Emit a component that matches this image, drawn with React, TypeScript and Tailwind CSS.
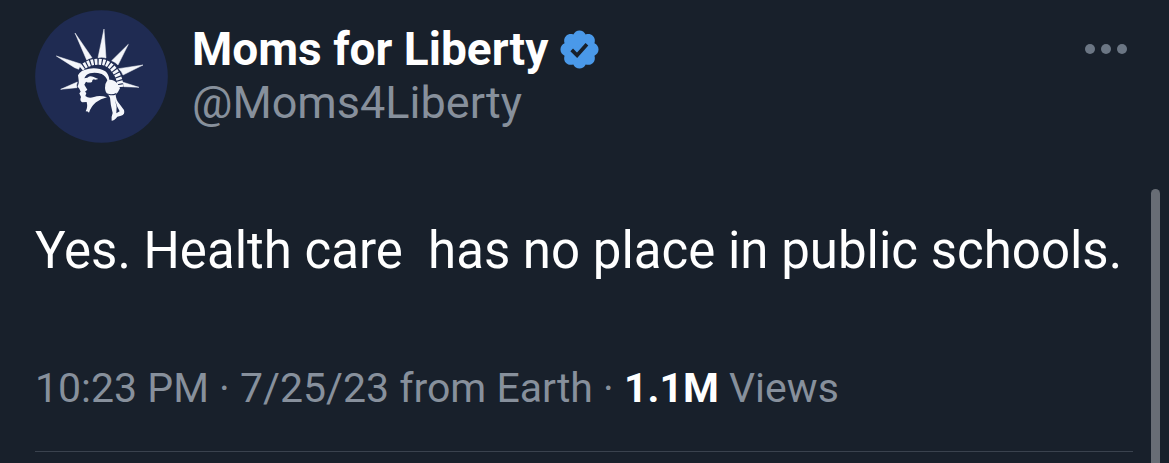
function LibertyAvatar() {
  return (
    <svg viewBox="16 15 399 399" className="size-[133px] shrink-0" role="img" aria-label="Moms for Liberty avatar">
      <circle cx="215.500" cy="214.500" r="199" fill="#1f2b52" />
      <g fill="#f4f6fb" stroke="#f4f6fb" strokeWidth="1.500">
        <path d="M80 153 L154 177 L147 193 Q141 190 135 188 Z" />
        <path d="M136 84 L187 158 Q177 160 171 165 Z" />
        <path d="M223 72 L229 159 Q217 155 205 158 Z" />
        <path d="M296 118 L265 180 Q257 171 246 167 Z" />
        <path d="M340 180 L280 210 Q276 199 267 191 Z" />
        <path d="M328 247 L283 245 Q283 238 278 231 Z" />
        <path d="M93 253 L143 231 Q139 240 142 248 Z" />
      </g>
      <path
        d="M154 190 Q176 171 204 170 Q236 170 253 194 Q270 215 273 246"
        fill="none"
        stroke="#f4f6fb"
        strokeWidth="18"
        strokeDasharray="8 3.500"
      />
      <path
        d="M145 211 Q152 195 178 191 Q207 187 227 199 Q237 207 239 224 Q253 223 264 236 L271 250 Q265 264 258 269 Q259 285 269 296 L283 315 Q287 329 274 332 L263 335 Q254 347 246 347 Q244 337 249 324 Q242 297 241 278 L235 268 Q227 263 226 249 Q226 235 233 226 Q229 214 216 207 Q197 201 181 205 Q169 208 164 220 L173 218 Q181 211 190 215 L206 222 L197 224 Q187 220 187 231 Q178 235 169 230 L164 239 L173 254 L166 260 L170 264 L167 273 Q177 282 193 276 Q210 269 232 277 Q213 281 199 292 Q184 305 178 323 Q175 319 168 319 Q175 307 171 291 L158 292 Q149 288 154 276 L149 265 L153 260 L149 251 L144 245 Q149 235 147 226 Z"
        fill="#f4f6fb"
      />
      <path d="M232 265 Q246 271 261 263 L258 269 Q247 273 236 269 Z" fill="#1f2b52" />
      <path d="M256 284 Q260 302 270 319 L260 325 Q263 304 256 284 Z" fill="#1f2b52" />
    </svg>
  );
}

function VerifiedBadge() {
  return (
    <svg viewBox="1.500 1.500 21 21" className="size-[39px] shrink-0" role="img" aria-label="Verified account">
      <path
        fill="#4a99e9"
        d="M22.250 12c0-1.430-.880-2.670-2.190-3.340.460-1.390.200-2.900-.810-3.910s-2.520-1.270-3.910-.810c-.660-1.310-1.910-2.190-3.340-2.190s-2.670.880-3.330 2.190c-1.400-.460-2.910-.200-3.920.810s-1.260 2.520-.800 3.910c-1.310.670-2.200 1.910-2.200 3.340s.890 2.670 2.200 3.340c-.460 1.390-.210 2.900.800 3.910s2.520 1.260 3.910.810c.670 1.310 1.910 2.190 3.340 2.190s2.680-.880 3.340-2.190c1.390.450 2.900.200 3.910-.810s1.270-2.520.810-3.910c1.310-.670 2.190-1.910 2.190-3.340z"
      />
      <path d="M7.800 12.200 L10.700 15.100 L16 9.200" fill="none" stroke="#18202b" strokeWidth="2" />
    </svg>
  );
}

export default function App() {
  return (
    <main className="relative min-h-screen overflow-hidden bg-[#18202b] font-['Roboto','Liberation_Sans',sans-serif]">
      <article className="pr-9 pl-[35px]">
        <header className="flex items-start gap-6 pt-[10px]">
          <LibertyAvatar />
          <div className="min-w-0 flex-1 pt-3">
            <div className="flex items-center gap-3">
              <h1 className="text-[46px] leading-[54px] font-bold whitespace-nowrap text-white">Moms for Liberty</h1>
              <VerifiedBadge />
            </div>
            <p className="text-[45px] leading-[54px] text-[#87909c]">@Moms4Liberty</p>
          </div>
          <button type="button" aria-label="More options" className="mt-[34px] mr-[6px] flex gap-[6px]">
            <span className="size-[10px] rounded-full bg-[#6b7684]" />
            <span className="size-[10px] rounded-full bg-[#6b7684]" />
            <span className="size-[10px] rounded-full bg-[#6b7684]" />
          </button>
        </header>
        <p className="mt-[78px] text-[51px] leading-[60px] whitespace-pre-wrap text-white">
          {"Yes. Health care  has no place in public schools."}
        </p>
        <p className="mt-[80px] border-b border-[#3a424e] pb-[36px] text-[41px] leading-[54px] text-[#87909c]">
          10:23 PM · 7/25/23 from Earth · <strong className="font-bold text-white">1.1M</strong> Views
        </p>
      </article>
      <div aria-hidden="true" className="absolute top-[189px] right-[9px] bottom-0 w-[9px] rounded-t-full bg-[#686d75]" />
    </main>
  );
}
